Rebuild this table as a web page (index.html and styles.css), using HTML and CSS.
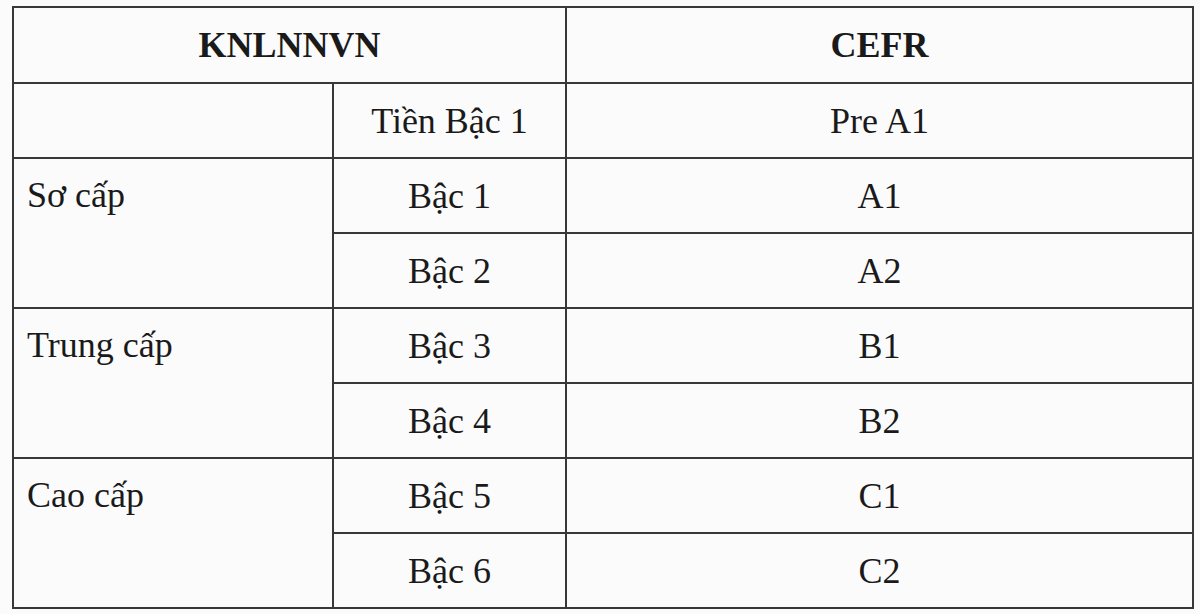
FILE: index.html
```html
<!DOCTYPE html>
<html lang="vi">
<head>
<meta charset="utf-8">
<title>KNLNNVN – CEFR</title>
<link rel="stylesheet" href="styles.css">
</head>
<body>
<table class="levels">
  <colgroup>
    <col class="c1">
    <col class="c2">
    <col class="c3">
  </colgroup>
  <thead>
    <tr class="head">
      <th colspan="2">KNLNNVN</th>
      <th>CEFR</th>
    </tr>
  </thead>
  <tbody>
    <tr>
      <td class="group"></td>
      <td>Tiền Bậc 1</td>
      <td>Pre A1</td>
    </tr>
    <tr>
      <td class="group" rowspan="2">Sơ cấp</td>
      <td>Bậc 1</td>
      <td>A1</td>
    </tr>
    <tr>
      <td>Bậc 2</td>
      <td>A2</td>
    </tr>
    <tr>
      <td class="group" rowspan="2">Trung cấp</td>
      <td>Bậc 3</td>
      <td>B1</td>
    </tr>
    <tr>
      <td>Bậc 4</td>
      <td>B2</td>
    </tr>
    <tr>
      <td class="group" rowspan="2">Cao cấp</td>
      <td>Bậc 5</td>
      <td>C1</td>
    </tr>
    <tr>
      <td>Bậc 6</td>
      <td>C2</td>
    </tr>
  </tbody>
</table>
</body>
</html>
```

FILE: styles.css
```css
html, body {
  margin: 0;
  padding: 0;
  background: #fbfbfc;
}

body {
  padding: 6px 0 0 12px;
  font-family: "Liberation Serif", "Times New Roman", serif;
  color: #1a1a1a;
}

.levels {
  border-collapse: collapse;
  table-layout: fixed;
  width: 1180px;
  font-size: 36px;
}

.c1 { width: 320px; }
.c2 { width: 233px; }
.c3 { width: 627px; }

.levels th,
.levels td {
  border: 2px solid #383838;
  padding: 0;
  text-align: center;
  vertical-align: middle;
}

.levels tr { height: 75px; }
.levels tr.head { height: 76px; }

.levels th {
  font-weight: bold;
}

.levels td.group {
  text-align: left;
  vertical-align: top;
  padding-left: 13px;
  line-height: 73px;
}
```
